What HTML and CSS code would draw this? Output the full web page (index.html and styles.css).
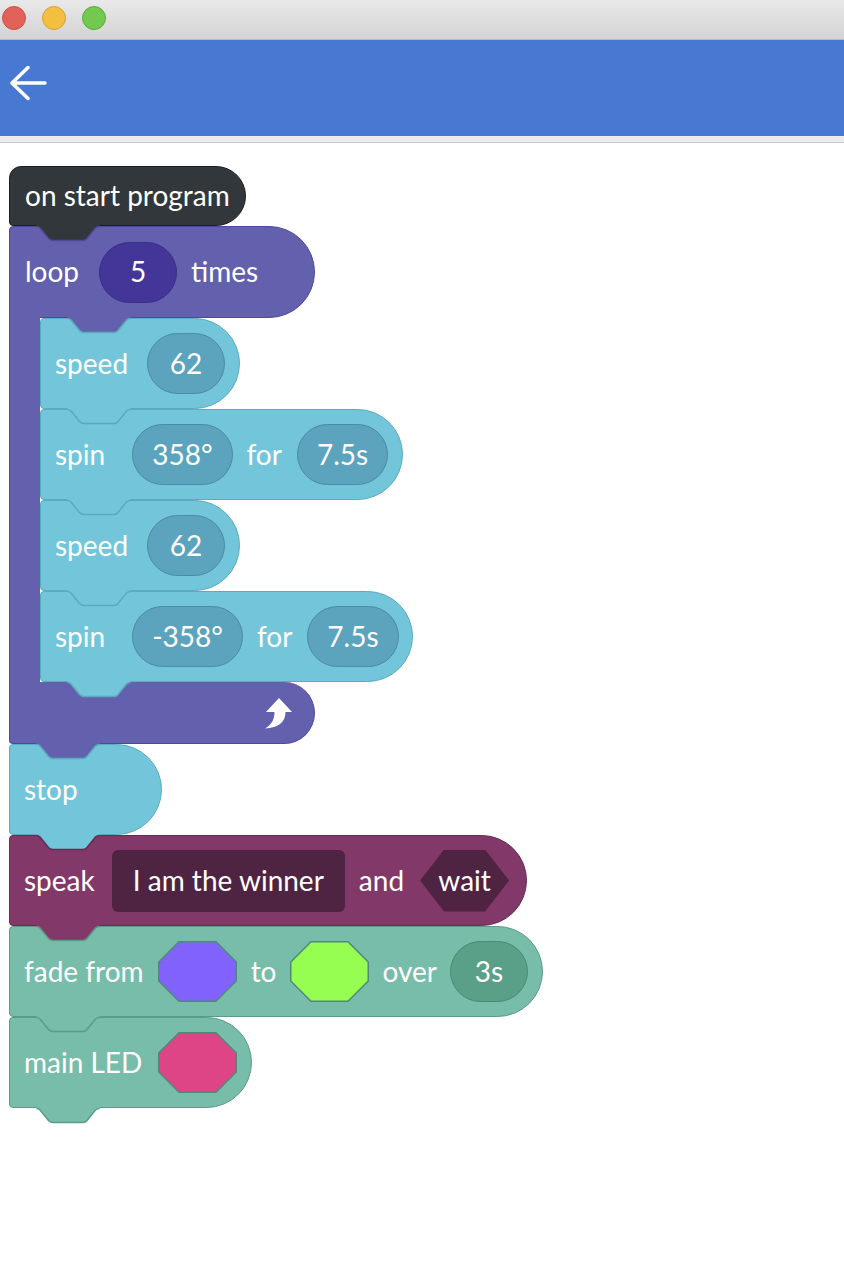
FILE: index.html
```html
<!DOCTYPE html>
<html>
<head>
<meta charset="utf-8">
<title>Program</title>
<link rel="stylesheet" href="styles.css">
</head>
<body>
<div class="titlebar">
  <span class="light red"></span><span class="light yellow"></span><span class="light green"></span>
</div>
<header class="appbar">
  <svg class="back" width="40" height="36" viewBox="0 0 40 36"><path d="M36 17H3M19 1.5L3 17L19 32.5"/></svg>
</header>
<div class="divider"></div>
<main class="canvas">
  <div class="stack">

    <div class="block hat c-hat">
      <span class="lbl">on start program</span>
      <svg class="tab f-hat s-loop" viewBox="0 0 66 18" width="66" height="18"><path class="f" d="M1.5 0V2.5Q3.5 2.5 5 4L13.5 14.5Q15.5 16.5 18 16.5H48Q50.5 16.5 52 14.5L60.5 4Q62 2.5 64.5 2.5V0Z"/><path class="s" d="M1.5 2.5Q3.5 2.5 5 4L13.5 14.5Q15.5 16.5 18 16.5H48Q50.5 16.5 52 14.5L60.5 4Q62 2.5 64.5 2.5"/></svg>
    </div>

    <div class="loop">
      <div class="block loop-head c-loop">
        <span class="lbl">loop</span>
        <span class="pill p-loop ml20">5</span>
        <span class="lbl ml14">times</span>
        <svg class="tab tab-inner f-loop s-cyan" viewBox="0 0 66 18" width="66" height="18"><path class="f" d="M1.5 0V2.5Q3.5 2.5 5 4L13.5 14.5Q15.5 16.5 18 16.5H48Q50.5 16.5 52 14.5L60.5 4Q62 2.5 64.5 2.5V0Z"/><path class="s" d="M1.5 2.5Q3.5 2.5 5 4L13.5 14.5Q15.5 16.5 18 16.5H48Q50.5 16.5 52 14.5L60.5 4Q62 2.5 64.5 2.5"/></svg>
      </div>
      <div class="loop-body">
        <div class="arm"></div>
        <div class="inner-stack">

          <div class="block c-cyan">
            <span class="lbl">speed</span>
            <span class="pill p-cyan ml19">62</span>
            <svg class="tab f-cyan s-cyan" viewBox="0 0 66 18" width="66" height="18"><path class="f" d="M1.5 0V2.5Q3.5 2.5 5 4L13.5 14.5Q15.5 16.5 18 16.5H48Q50.5 16.5 52 14.5L60.5 4Q62 2.5 64.5 2.5V0Z"/><path class="s" d="M1.5 2.5Q3.5 2.5 5 4L13.5 14.5Q15.5 16.5 18 16.5H48Q50.5 16.5 52 14.5L60.5 4Q62 2.5 64.5 2.5"/></svg>
          </div>

          <div class="block c-cyan">
            <span class="lbl">spin</span>
            <span class="pill p-cyan ml27">358°</span>
            <span class="lbl ml14">for</span>
            <span class="pill p-cyan ml15">7.5s</span>
            <svg class="tab f-cyan s-cyan" viewBox="0 0 66 18" width="66" height="18"><path class="f" d="M1.5 0V2.5Q3.5 2.5 5 4L13.5 14.5Q15.5 16.5 18 16.5H48Q50.5 16.5 52 14.5L60.5 4Q62 2.5 64.5 2.5V0Z"/><path class="s" d="M1.5 2.5Q3.5 2.5 5 4L13.5 14.5Q15.5 16.5 18 16.5H48Q50.5 16.5 52 14.5L60.5 4Q62 2.5 64.5 2.5"/></svg>
          </div>

          <div class="block c-cyan">
            <span class="lbl">speed</span>
            <span class="pill p-cyan ml19">62</span>
            <svg class="tab f-cyan s-cyan" viewBox="0 0 66 18" width="66" height="18"><path class="f" d="M1.5 0V2.5Q3.5 2.5 5 4L13.5 14.5Q15.5 16.5 18 16.5H48Q50.5 16.5 52 14.5L60.5 4Q62 2.5 64.5 2.5V0Z"/><path class="s" d="M1.5 2.5Q3.5 2.5 5 4L13.5 14.5Q15.5 16.5 18 16.5H48Q50.5 16.5 52 14.5L60.5 4Q62 2.5 64.5 2.5"/></svg>
          </div>

          <div class="block c-cyan">
            <span class="lbl">spin</span>
            <span class="pill p-cyan ml27">-358°</span>
            <span class="lbl ml14">for</span>
            <span class="pill p-cyan ml15">7.5s</span>
            <svg class="tab f-cyan s-cyan" viewBox="0 0 66 18" width="66" height="18"><path class="f" d="M1.5 0V2.5Q3.5 2.5 5 4L13.5 14.5Q15.5 16.5 18 16.5H48Q50.5 16.5 52 14.5L60.5 4Q62 2.5 64.5 2.5V0Z"/><path class="s" d="M1.5 2.5Q3.5 2.5 5 4L13.5 14.5Q15.5 16.5 18 16.5H48Q50.5 16.5 52 14.5L60.5 4Q62 2.5 64.5 2.5"/></svg>
          </div>

        </div>
      </div>
      <div class="loop-foot">
        <svg class="repeat" width="28" height="31" viewBox="0 0 28 31"><path d="M15 0L28 14H21.5C21.5 24 14.5 30 1 30.5C8 26.5 10.5 21 10.5 14H2Z"/></svg>
        <svg class="tab f-loop s-cyan" viewBox="0 0 66 18" width="66" height="18"><path class="f" d="M1.5 0V2.5Q3.5 2.5 5 4L13.5 14.5Q15.5 16.5 18 16.5H48Q50.5 16.5 52 14.5L60.5 4Q62 2.5 64.5 2.5V0Z"/><path class="s" d="M1.5 2.5Q3.5 2.5 5 4L13.5 14.5Q15.5 16.5 18 16.5H48Q50.5 16.5 52 14.5L60.5 4Q62 2.5 64.5 2.5"/></svg>
      </div>
    </div>

    <div class="block short c-cyan">
      <span class="lbl">stop</span>
      <svg class="tab f-cyan s-speak" viewBox="0 0 66 18" width="66" height="18"><path class="f" d="M1.5 0V2.5Q3.5 2.5 5 4L13.5 14.5Q15.5 16.5 18 16.5H48Q50.5 16.5 52 14.5L60.5 4Q62 2.5 64.5 2.5V0Z"/><path class="s" d="M1.5 2.5Q3.5 2.5 5 4L13.5 14.5Q15.5 16.5 18 16.5H48Q50.5 16.5 52 14.5L60.5 4Q62 2.5 64.5 2.5"/></svg>
    </div>

    <div class="block c-speak wide-end">
      <span class="lbl">speak</span>
      <span class="field ml17">I am the winner</span>
      <span class="lbl ml14">and</span>
      <span class="hex ml16">wait</span>
      <svg class="tab f-speak s-green" viewBox="0 0 66 18" width="66" height="18"><path class="f" d="M1.5 0V2.5Q3.5 2.5 5 4L13.5 14.5Q15.5 16.5 18 16.5H48Q50.5 16.5 52 14.5L60.5 4Q62 2.5 64.5 2.5V0Z"/><path class="s" d="M1.5 2.5Q3.5 2.5 5 4L13.5 14.5Q15.5 16.5 18 16.5H48Q50.5 16.5 52 14.5L60.5 4Q62 2.5 64.5 2.5"/></svg>
    </div>

    <div class="block c-green">
      <span class="lbl">fade from</span>
      <svg class="oct ml14" width="79" height="61" viewBox="0 0 79 61"><polygon class="o-violet" points="21,0.75 58,0.75 78.25,21 78.25,40 58,60.25 21,60.25 0.75,40 0.75,21"/></svg>
      <span class="lbl ml14">to</span>
      <svg class="oct ml14" width="79" height="61" viewBox="0 0 79 61"><polygon class="o-lime" points="21,0.75 58,0.75 78.25,21 78.25,40 58,60.25 21,60.25 0.75,40 0.75,21"/></svg>
      <span class="lbl ml13">over</span>
      <span class="pill p-green ml13">3s</span>
      <svg class="tab f-green s-green" viewBox="0 0 66 18" width="66" height="18"><path class="f" d="M1.5 0V2.5Q3.5 2.5 5 4L13.5 14.5Q15.5 16.5 18 16.5H48Q50.5 16.5 52 14.5L60.5 4Q62 2.5 64.5 2.5V0Z"/><path class="s" d="M1.5 2.5Q3.5 2.5 5 4L13.5 14.5Q15.5 16.5 18 16.5H48Q50.5 16.5 52 14.5L60.5 4Q62 2.5 64.5 2.5"/></svg>
    </div>

    <div class="block c-green">
      <span class="lbl">main LED</span>
      <svg class="oct ml16" width="79" height="61" viewBox="0 0 79 61"><polygon class="o-pink" points="21,0.75 58,0.75 78.25,21 78.25,40 58,60.25 21,60.25 0.75,40 0.75,21"/></svg>
      <svg class="tab f-green s-green" viewBox="0 0 66 18" width="66" height="18"><path class="f" d="M1.5 0V2.5Q3.5 2.5 5 4L13.5 14.5Q15.5 16.5 18 16.5H48Q50.5 16.5 52 14.5L60.5 4Q62 2.5 64.5 2.5V0Z"/><path class="s" d="M1.5 2.5Q3.5 2.5 5 4L13.5 14.5Q15.5 16.5 18 16.5H48Q50.5 16.5 52 14.5L60.5 4Q62 2.5 64.5 2.5"/></svg>
    </div>

  </div>
</main>
</body>
</html>
```

FILE: styles.css
```css
* { box-sizing: border-box; }
html, body { margin: 0; padding: 0; background: #ffffff; }
body {
  width: 844px;
  height: 1268px;
  overflow: hidden;
  font-family: Lato, "Open Sans", "DejaVu Sans", sans-serif;
}

/* window chrome */
.titlebar {
  height: 40px;
  background: linear-gradient(#e9e9e9, #d3d3d3);
  border-bottom: 1px solid #b8b8b8;
  display: flex;
  align-items: center;
  gap: 16px;
  padding: 0 0 3px 2px;
}
.light { width: 24px; height: 24px; border-radius: 50%; border: 1px solid; }
.red { background: #e2625a; border-color: #cc4f47; }
.yellow { background: #f4bf3f; border-color: #d8a137; }
.green { background: #73c84f; border-color: #59ab3b; }

.appbar {
  height: 96px;
  background: #4879d2;
  display: flex;
  align-items: flex-start;
  padding: 26px 0 0 9px;
}
.back path { fill: none; stroke: #ffffff; stroke-width: 3.5; stroke-linecap: round; stroke-linejoin: round; }

.divider { height: 7px; background: #ececec; border-bottom: 1px solid #c9c9c9; }

/* canvas */
.canvas { padding: 23px 0 0 9px; }
.stack { display: flex; flex-direction: column; align-items: flex-start; }

.block {
  position: relative;
  display: flex;
  align-items: center;
  height: 91px;
  border: 1.5px solid;
  border-radius: 4px 46px 46px 4px;
  padding: 0 13.5px 0 14px;
  color: #ffffff;
  font-size: 28px;
  white-space: nowrap;
}
.lbl { line-height: 1; padding-bottom: 2px; }

.hat {
  height: 60px;
  border-radius: 12px 30px 30px 4px;
  padding: 0 15px 0 15px;
}
.short { width: 153px; }
.wide-end { padding-right: 17px; }

.c-hat { background: #32373b; border-color: #1c1f22; }
.c-loop { background: #6360ad; border-color: #4e499b; }
.c-cyan { background: #73c6d9; border-color: #5aaac0; }
.c-speak { background: #823868; border-color: #682a54; }
.c-green { background: #78bcaa; border-color: #5b9b88; }

/* loop (C block) */
.loop { display: flex; flex-direction: column; align-items: flex-start; }
.loop-head {
  width: 306px;
  height: 92px;
  border-radius: 4px 46px 46px 0;
  padding-left: 15px;
}
.loop-body { display: flex; align-items: stretch; }
.arm {
  position: relative;
  width: 31px;
  margin-top: -1.5px;
  background: #6360ad;
  border-left: 1.5px solid #4e499b;
}
.inner-stack { display: flex; flex-direction: column; align-items: flex-start; }
.loop-foot {
  position: relative;
  width: 306px;
  height: 62px;
  background: #6360ad;
  border: 1.5px solid #4e499b;
  border-top: none;
  border-radius: 0 31px 31px 4px;
  display: flex;
  align-items: center;
  justify-content: flex-end;
  padding: 0 22.5px 0 0;
}
.repeat { margin-top: 1px; }
.repeat path { fill: #ffffff; }

/* connector tabs */
.tab {
  position: absolute;
  left: 24.5px;
  top: calc(100% - 1px);
  z-index: 3;
  overflow: visible;
}
.tab-inner { left: 55.5px; }
.tab .f { stroke: none; }
.tab .s { fill: none; stroke-width: 1.5; }
.f-hat { fill: #32373b; }
.f-loop { fill: #6360ad; }
.f-cyan { fill: #73c6d9; }
.f-speak { fill: #823868; }
.f-green { fill: #78bcaa; }
.s-loop { stroke: #4e499b; }
.s-cyan { stroke: #5aaac0; }
.s-speak { stroke: #682a54; }
.s-green { stroke: #5b9b88; }

/* inputs */
.pill {
  display: flex;
  align-items: center;
  justify-content: center;
  height: 61px;
  min-width: 78px;
  padding: 0 19px 2px;
  border: 1.5px solid;
  border-radius: 31px;
  line-height: 1;
}
.p-loop { background: #443699; border-color: #3a2e87; }
.p-cyan { background: #5ca3bd; border-color: #4b8ba3; }
.p-green { background: #5a9f88; border-color: #4a8a74; }

.field {
  display: flex;
  align-items: center;
  height: 62px;
  padding: 0 21px 2px;
  background: #4f2443;
  border-radius: 6px;
  line-height: 1;
}
.hex {
  display: flex;
  align-items: center;
  justify-content: center;
  height: 62px;
  width: 89px;
  padding-bottom: 2px;
  background: #4f2443;
  clip-path: polygon(24px 0, calc(100% - 24px) 0, 100% 50%, calc(100% - 24px) 100%, 24px 100%, 0 50%);
  line-height: 1;
}

.oct { display: block; flex: none; }
.oct polygon { stroke: #4f8a78; stroke-width: 1.5; }
.o-violet { fill: #8262fc; }
.o-lime { fill: #96fd51; }
.o-pink { fill: #dd4586; }

/* spacing */
.ml13 { margin-left: 13px; }
.ml14 { margin-left: 14px; }
.ml15 { margin-left: 15px; }
.ml16 { margin-left: 16px; }
.ml17 { margin-left: 17px; }
.ml19 { margin-left: 19px; }
.ml20 { margin-left: 20px; }
.ml27 { margin-left: 27px; }
```
